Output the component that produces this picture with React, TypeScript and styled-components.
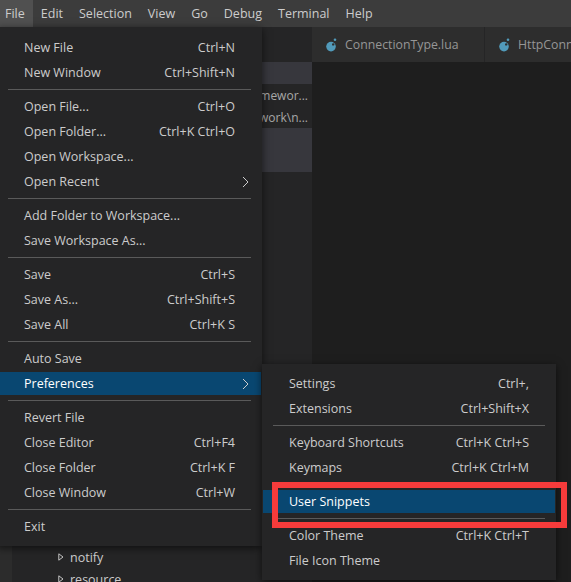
import React from "react";
import styled, { createGlobalStyle } from "styled-components";

const GlobalStyle = createGlobalStyle`
  * { box-sizing: border-box; }
  html, body { margin: 0; padding: 0; background: #1e1e1e; overflow: hidden; }
  body { font-family: "Open Sans", "Noto Sans", sans-serif; }
`;

const UI_FONT = `"Open Sans", "Noto Sans", sans-serif`;

const Window = styled.div`
  position: relative;
  width: 571px;
  height: 582px;
  overflow: hidden;
  display: flex;
  flex-direction: column;
  background: #1e1e1e;
  font-family: ${UI_FONT};
  font-size: 12.5px;
  color: #cccccc;
`;

/* ---------- menu bar ---------- */
const MenuBar = styled.nav`
  height: 27px;
  flex-shrink: 0;
  display: flex;
  align-items: stretch;
  background: #3c3c3c;
  position: relative;
  z-index: 10;
`;

const MenuTitles = styled.div`
  display: flex;
  align-items: stretch;
  margin-left: -3px;
`;

const MenuTitle = styled.div<{ $open?: boolean }>`
  position: relative;
  display: flex;
  align-items: center;
  padding: 0 8px;
  color: #cccccc;
  background: ${(p) => (p.$open ? "#505050" : "transparent")};
  white-space: nowrap;
`;

/* ---------- dropdown menus ---------- */
const MenuPanel = styled.div<{ $sub?: boolean }>`
  position: absolute;
  top: ${(p) => (p.$sub ? "-8px" : "100%")};
  left: ${(p) => (p.$sub ? "calc(100% + 1px)" : "0")};
  width: ${(p) => (p.$sub ? 294 : 265)}px;
  display: flex;
  flex-direction: column;
  padding: ${(p) => (p.$sub ? "7px 1px 7px" : "8px 1px 7px")};
  background: #252526;
  box-shadow: 0 2px 8px rgba(0, 0, 0, 0.6);
  z-index: 20;
`;

const MenuRow = styled.div<{ $active?: boolean }>`
  position: relative;
  display: flex;
  align-items: center;
  height: 23px;
  margin: 1px 0;
  padding: 0 26px;
  white-space: nowrap;
  color: ${(p) => (p.$active ? "#ffffff" : "#cccccc")};
  background: ${(p) => (p.$active ? "#094771" : "transparent")};
`;

const RowLabel = styled.span`
  flex: 1;
`;

const RowKeys = styled.span`
  margin-left: 24px;
`;

const Chevron = styled.svg`
  width: 7px;
  height: 12px;
  margin-right: -14px;
  flex-shrink: 0;
`;

const MenuSeparator = styled.div`
  height: 1px;
  margin: 4px 10px;
  background: #5a5a5a;
  flex-shrink: 0;
`;

const Annotation = styled.div`
  position: absolute;
  left: 9px;
  top: -8px;
  right: -12px;
  bottom: -15px;
  border: 6px solid #f63b3b;
  pointer-events: none;
  z-index: 5;
`;

/* ---------- workbench ---------- */
const Workbench = styled.div`
  flex: 1;
  min-height: 0;
  display: flex;
`;

const ActivityStrip = styled.div`
  width: 12px;
  flex-shrink: 0;
  background: #2c2c2c;
`;

const SideBar = styled.aside`
  width: 300px;
  flex-shrink: 0;
  display: flex;
  flex-direction: column;
  background: #252526;
  overflow: hidden;
`;

const SideHeader = styled.div`
  height: 35px;
  flex-shrink: 0;
`;

const TreeRow = styled.div<{ $selected?: boolean; $indent: number }>`
  height: 22px;
  flex-shrink: 0;
  display: flex;
  align-items: center;
  gap: 6px;
  padding-left: ${(p) => p.$indent}px;
  padding-right: 4px;
  background: ${(p) => (p.$selected ? "#37373d" : "transparent")};
  color: #cccccc;
  font-size: 12.5px;
  white-space: nowrap;
`;

const TreeLabel = styled.span`
  flex-shrink: 0;
`;

const Description = styled.span`
  margin-left: auto;
  color: #a8a8a8;
  font-size: 12px;
  white-space: nowrap;
`;

const Twistie = styled.svg`
  width: 6px;
  height: 8px;
  flex-shrink: 0;
`;

const Editor = styled.main`
  flex: 1;
  min-width: 0;
  display: flex;
  flex-direction: column;
  background: #1e1e1e;
`;

const TabStrip = styled.div`
  height: 35px;
  flex-shrink: 0;
  display: flex;
  background: #252526;
  overflow: hidden;
`;

const Tab = styled.div<{ $width: number }>`
  width: ${(p) => p.$width}px;
  flex-shrink: 0;
  display: flex;
  align-items: center;
  gap: 7px;
  padding-left: 14px;
  background: #2d2d2d;
  border-right: 1px solid #252526;
  color: #969696;
  font-size: 12.3px;
  white-space: nowrap;
  overflow: hidden;
`;

const LuaIcon = styled.svg`
  width: 12px;
  height: 14px;
  flex-shrink: 0;
`;

const EditorBody = styled.div`
  flex: 1;
  background: #1e1e1e;
`;

/* ---------- data ---------- */
type Item = {
  label: string;
  keys?: string;
  submenu?: boolean;
  active?: boolean;
  annotated?: boolean;
};
type Entry = Item | "sep";

const preferencesMenu: Entry[] = [
  { label: "Settings", keys: "Ctrl+," },
  { label: "Extensions", keys: "Ctrl+Shift+X" },
  "sep",
  { label: "Keyboard Shortcuts", keys: "Ctrl+K Ctrl+S" },
  { label: "Keymaps", keys: "Ctrl+K Ctrl+M" },
  "sep",
  { label: "User Snippets", active: true, annotated: true },
  "sep",
  { label: "Color Theme", keys: "Ctrl+K Ctrl+T" },
  { label: "File Icon Theme" },
];

const fileMenu: Entry[] = [
  { label: "New File", keys: "Ctrl+N" },
  { label: "New Window", keys: "Ctrl+Shift+N" },
  "sep",
  { label: "Open File...", keys: "Ctrl+O" },
  { label: "Open Folder...", keys: "Ctrl+K Ctrl+O" },
  { label: "Open Workspace..." },
  { label: "Open Recent", submenu: true },
  "sep",
  { label: "Add Folder to Workspace..." },
  { label: "Save Workspace As..." },
  "sep",
  { label: "Save", keys: "Ctrl+S" },
  { label: "Save As...", keys: "Ctrl+Shift+S" },
  { label: "Save All", keys: "Ctrl+K S" },
  "sep",
  { label: "Auto Save" },
  { label: "Preferences", submenu: true, active: true },
  "sep",
  { label: "Revert File" },
  { label: "Close Editor", keys: "Ctrl+F4" },
  { label: "Close Folder", keys: "Ctrl+K F" },
  { label: "Close Window", keys: "Ctrl+W" },
  "sep",
  { label: "Exit" },
];

const menuTitles = ["File", "Edit", "Selection", "View", "Go", "Debug", "Terminal", "Help"];

type Row = {
  label?: string;
  desc?: string;
  selected?: boolean;
  folder?: boolean;
  indent: number;
};

/* rows that sit beneath the open menu show only their visible tail */
const treeRows: Row[] = [
  { selected: true, indent: 8 },
  { desc: "mewor...", indent: 36 },
  { desc: "ework\\n...", indent: 36 },
  { selected: true, indent: 36 },
  { selected: true, indent: 8 },
  ...Array.from({ length: 17 }, () => ({ indent: 46 })),
  { label: "notify", folder: true, indent: 46 },
  { label: "resource", folder: true, indent: 46 },
];

/* ---------- components ---------- */
function ChevronIcon() {
  return (
    <Chevron viewBox="0 0 7 12">
      <polyline points="1,1 6,6 1,11" fill="none" stroke="#cccccc" strokeWidth="1" />
    </Chevron>
  );
}

function Menu({ entries, sub }: { entries: Entry[]; sub?: boolean }) {
  return (
    <MenuPanel $sub={sub}>
      {entries.map((e, i) =>
        e === "sep" ? (
          <MenuSeparator key={i} />
        ) : (
          <MenuRow key={i} $active={e.active}>
            <RowLabel>{e.label}</RowLabel>
            {e.keys && <RowKeys>{e.keys}</RowKeys>}
            {e.submenu && <ChevronIcon />}
            {e.submenu && e.active && <Menu entries={preferencesMenu} sub />}
            {e.annotated && <Annotation />}
          </MenuRow>
        )
      )}
    </MenuPanel>
  );
}

function Lua() {
  return (
    <LuaIcon viewBox="0 0 12 14">
      <circle cx="5" cy="8.6" r="4.8" fill="#519aba" />
      <circle cx="7.2" cy="6.4" r="1.2" fill="#2d2d2d" />
      <circle cx="9" cy="1.8" r="1.3" fill="#519aba" />
    </LuaIcon>
  );
}

function TwistieIcon() {
  return (
    <Twistie viewBox="0 0 6 8">
      <polygon points="0.8,0.8 5,4 0.8,7.2" fill="#252526" stroke="#c5c5c5" strokeWidth="1" />
    </Twistie>
  );
}

export default function App() {
  return (
    <Window>
      <GlobalStyle />
      <MenuBar>
        <MenuTitles>
          {menuTitles.map((t) => (
            <MenuTitle key={t} $open={t === "File"}>
              {t}
              {t === "File" && <Menu entries={fileMenu} />}
            </MenuTitle>
          ))}
        </MenuTitles>
      </MenuBar>
      <Workbench>
        <ActivityStrip />
        <SideBar>
          <SideHeader />
          {treeRows.map((r, i) => (
            <TreeRow key={i} $selected={r.selected} $indent={r.indent}>
              {r.folder && <TwistieIcon />}
              {r.label && <TreeLabel>{r.label}</TreeLabel>}
              {r.desc && <Description>{r.desc}</Description>}
            </TreeRow>
          ))}
        </SideBar>
        <Editor>
          <TabStrip>
            <Tab $width={173}>
              <Lua />
              ConnectionType.lua
            </Tab>
            <Tab $width={170}>
              <Lua />
              HttpConnection.lua
            </Tab>
          </TabStrip>
          <EditorBody />
        </Editor>
      </Workbench>
    </Window>
  );
}
